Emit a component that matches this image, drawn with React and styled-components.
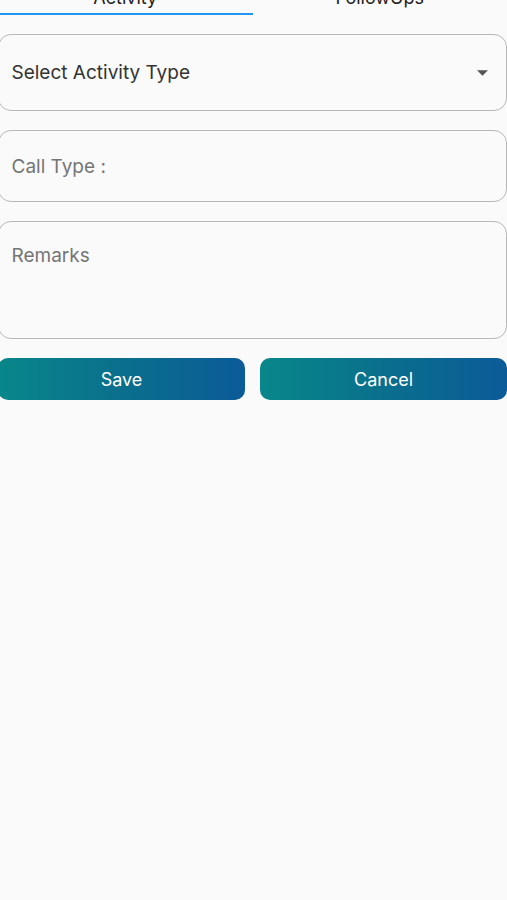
import React from "react";
import styled, { createGlobalStyle } from "styled-components";

const GlobalStyle = createGlobalStyle`
  html, body {
    margin: 0;
    padding: 0;
    background: #fafafa;
    overflow: hidden;
  }
  body {
    font-family: Inter, "Noto Sans", sans-serif;
  }
`;

const App = () => {
  return (
    <Page>
      <GlobalStyle />
      <Tabs>
        <Tab active>Activity</Tab>
        <Tab>FollowUps</Tab>
      </Tabs>
      <Form>
        <Field height={77}>
          <Value>Select Activity Type</Value>
          <Arrow viewBox="0 0 12 6">
            <path d="M0 0 L12 0 L6 6 Z" fill="#555" />
          </Arrow>
        </Field>
        <Field height={72}>
          <Placeholder>Call Type :</Placeholder>
        </Field>
        <Field height={118} top>
          <Placeholder>Remarks</Placeholder>
        </Field>
        <Buttons>
          <Button type="button">Save</Button>
          <Button type="button">Cancel</Button>
        </Buttons>
      </Form>
    </Page>
  );
};

const Page = styled.div`
  width: 509px;
  margin-left: -2px;
  min-height: 900px;
  background: #fafafa;
`;

const Tabs = styled.div`
  display: flex;
  height: 35px;
  margin-top: -20px;
`;

const Tab = styled.div`
  flex: 1;
  display: flex;
  align-items: flex-end;
  justify-content: center;
  box-sizing: border-box;
  padding-bottom: 5px;
  font-size: 18px;
  line-height: 20px;
  color: #222;
  border-bottom: 2px solid ${(p) => (p.active ? "#2196f3" : "transparent")};
`;

const Form = styled.div`
  display: flex;
  flex-direction: column;
  gap: 19px;
  padding-top: 19px;
`;

const Field = styled.div`
  height: ${(p) => p.height}px;
  box-sizing: border-box;
  border: 1.5px solid #b8b8b8;
  border-radius: 13px;
  display: flex;
  align-items: ${(p) => (p.top ? "flex-start" : "center")};
  padding: ${(p) => (p.top ? "22px 18px 0 12.5px" : "0 18px 0 12.5px")};
`;

const Value = styled.span`
  flex: 1;
  font-size: 19px;
  color: #333;
`;

const Placeholder = styled.span`
  flex: 1;
  font-size: 19px;
  color: #757575;
`;

const Arrow = styled.svg`
  width: 11px;
  height: 6px;
`;

const Buttons = styled.div`
  display: grid;
  grid-template-columns: 1fr 1fr;
  gap: 15px;
`;

const Button = styled.button`
  height: 42px;
  border: none;
  border-radius: 10px;
  background: linear-gradient(90deg, #08878a 0%, #0a6f8d 50%, #0b5b98 100%);
  color: #fff;
  font-family: Inter, "Noto Sans", sans-serif;
  font-size: 18px;
  cursor: pointer;
`;

export default App;
